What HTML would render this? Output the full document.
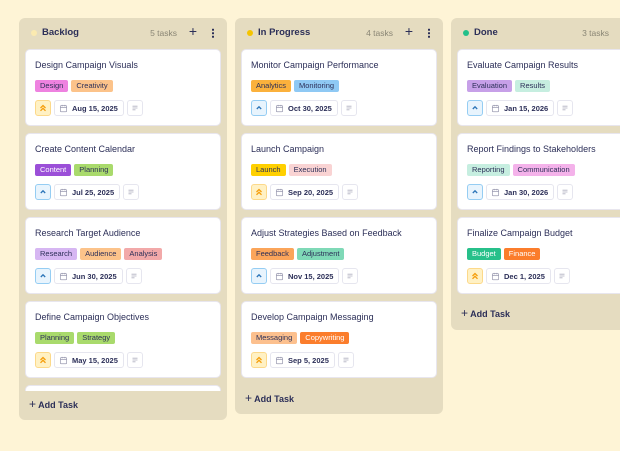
<!DOCTYPE html>
<html><head><style>
*{box-sizing:border-box;margin:0;padding:0}
body{width:620px;height:451px;background:#fef4d6;font-family:"Liberation Sans",sans-serif;color:#2c2f58;position:relative;overflow:hidden}
.col{position:absolute;top:18px;width:208px;background:#e5dcc0;border-radius:6px}
.hd{position:absolute;top:0;left:0;right:0;height:31px}
.dot{position:absolute;left:12px;top:12px;width:6px;height:6px;border-radius:50%}
.name{position:absolute;left:23px;top:9px;font-size:9.5px;font-weight:bold}
.cnt{position:absolute;right:50px;top:10px;font-size:8.5px;color:#8a8675}
.plus{position:absolute;right:30px;top:5px;font-size:14px;color:#2c2f58}
.more{position:absolute;right:13px;top:10px;width:2px;height:10px;background:radial-gradient(circle,#2c2f58 1px,transparent 1.2px) 0 0/2px 3.5px}
.card{position:absolute;left:6px;width:196px;height:77px;background:#fff;border:1px solid #e8e6ee;border-radius:5px}
.t{position:absolute;left:9px;top:10px;font-size:9px;white-space:nowrap}
.tags{position:absolute;left:9px;top:30px;display:flex;gap:3px}
.tag{height:12px;line-height:12px;font-size:7.5px;padding:0 5px;border-radius:2px;color:#2c2f58}
.ft{position:absolute;left:9px;top:50px;display:flex;gap:3px}
.pr{width:16px;height:16px;border-radius:3px;border:1px solid;display:flex;align-items:center;justify-content:center}
.hi{background:#fff1c4;border-color:#fcd98a}
.lo{background:#e8f4fd;border-color:#95cdf3}
.dt{height:16px;border:1px solid #e6e6ef;border-radius:3px;font-size:7.5px;display:flex;align-items:center;padding:0 5px 0 4px;gap:4px;font-weight:bold}
.cm{width:16px;height:16px;border:1px solid #e6e6ef;border-radius:3px;display:flex;align-items:center;justify-content:center}
.add{position:absolute;left:10px;font-size:9px;font-weight:bold}
</style></head><body>
<svg width="0" height="0" style="position:absolute">
<defs>
<symbol id="hi" viewBox="0 0 10 10"><path d="M2.5 5 L5 2.5 L7.5 5 M2.5 7.8 L5 5.3 L7.5 7.8" fill="none" stroke="#f59e0b" stroke-width="1.3"/></symbol>
<symbol id="lo" viewBox="0 0 10 10"><path d="M2.8 6 L5 3.8 L7.2 6" fill="none" stroke="#2b74b8" stroke-width="1.3"/></symbol>
<symbol id="cal" viewBox="0 0 10 10"><rect x="1.5" y="1.8" width="7" height="6.8" rx="1" fill="none" stroke="#9a9ab0" stroke-width=".8"/><path d="M1.5 4h7M3.5 1v1.6M6.5 1v1.6" stroke="#9a9ab0" stroke-width=".8"/></symbol>
<symbol id="cm" viewBox="0 0 10 10"><path d="M2.5 3.2h5M2.5 5h5M2.5 6.8h3" stroke="#b0b0c0" stroke-width=".8"/></symbol>
</defs></svg>

<!-- Backlog -->
<div class="col" style="left:19px;height:402px">
<div class="hd"><div class="dot" style="background:#fbeab0"></div><div class="name">Backlog</div><div class="cnt">5 tasks</div><div class="plus">+</div><div class="more"></div></div>
<div class="card" style="top:31px"><div class="t">Design Campaign Visuals</div><div class="tags"><span class="tag" style="background:#ee82e0">Design</span><span class="tag" style="background:#fcc38a">Creativity</span></div><div class="ft"><div class="pr hi"><svg width="10" height="10"><use href="#hi"/></svg></div><div class="dt"><svg width="9" height="9"><use href="#cal"/></svg>Aug 15, 2025</div><div class="cm"><svg width="10" height="10"><use href="#cm"/></svg></div></div></div>
<div class="card" style="top:115px"><div class="t">Create Content Calendar</div><div class="tags"><span class="tag" style="background:#9b4fd8;color:#fff">Content</span><span class="tag" style="background:#a9da6c">Planning</span></div><div class="ft"><div class="pr lo"><svg width="10" height="10"><use href="#lo"/></svg></div><div class="dt"><svg width="9" height="9"><use href="#cal"/></svg>Jul 25, 2025</div><div class="cm"><svg width="10" height="10"><use href="#cm"/></svg></div></div></div>
<div class="card" style="top:199px"><div class="t">Research Target Audience</div><div class="tags"><span class="tag" style="background:#d6b6f2">Research</span><span class="tag" style="background:#fcc38a">Audience</span><span class="tag" style="background:#f2a9a9">Analysis</span></div><div class="ft"><div class="pr lo"><svg width="10" height="10"><use href="#lo"/></svg></div><div class="dt"><svg width="9" height="9"><use href="#cal"/></svg>Jun 30, 2025</div><div class="cm"><svg width="10" height="10"><use href="#cm"/></svg></div></div></div>
<div class="card" style="top:283px"><div class="t">Define Campaign Objectives</div><div class="tags"><span class="tag" style="background:#a9da6c">Planning</span><span class="tag" style="background:#a9da6c">Strategy</span></div><div class="ft"><div class="pr hi"><svg width="10" height="10"><use href="#hi"/></svg></div><div class="dt"><svg width="9" height="9"><use href="#cal"/></svg>May 15, 2025</div><div class="cm"><svg width="10" height="10"><use href="#cm"/></svg></div></div></div>
<div class="card" style="top:367px;height:6px;border-bottom:none;border-radius:5px 5px 0 0"></div>
<div class="add" style="top:379px"><span style="font-size:12px;font-weight:normal">+</span> Add Task</div>
</div>

<!-- In Progress -->
<div class="col" style="left:235px;height:396px">
<div class="hd"><div class="dot" style="background:#f5c400"></div><div class="name">In Progress</div><div class="cnt">4 tasks</div><div class="plus">+</div><div class="more"></div></div>
<div class="card" style="top:31px"><div class="t">Monitor Campaign Performance</div><div class="tags"><span class="tag" style="background:#fbb13c">Analytics</span><span class="tag" style="background:#8fc9f4">Monitoring</span></div><div class="ft"><div class="pr lo"><svg width="10" height="10"><use href="#lo"/></svg></div><div class="dt"><svg width="9" height="9"><use href="#cal"/></svg>Oct 30, 2025</div><div class="cm"><svg width="10" height="10"><use href="#cm"/></svg></div></div></div>
<div class="card" style="top:115px"><div class="t">Launch Campaign</div><div class="tags"><span class="tag" style="background:#ffd000">Launch</span><span class="tag" style="background:#f9d3d3">Execution</span></div><div class="ft"><div class="pr hi"><svg width="10" height="10"><use href="#hi"/></svg></div><div class="dt"><svg width="9" height="9"><use href="#cal"/></svg>Sep 20, 2025</div><div class="cm"><svg width="10" height="10"><use href="#cm"/></svg></div></div></div>
<div class="card" style="top:199px"><div class="t">Adjust Strategies Based on Feedback</div><div class="tags"><span class="tag" style="background:#fba55a">Feedback</span><span class="tag" style="background:#7fd9b7">Adjustment</span></div><div class="ft"><div class="pr lo"><svg width="10" height="10"><use href="#lo"/></svg></div><div class="dt"><svg width="9" height="9"><use href="#cal"/></svg>Nov 15, 2025</div><div class="cm"><svg width="10" height="10"><use href="#cm"/></svg></div></div></div>
<div class="card" style="top:283px"><div class="t">Develop Campaign Messaging</div><div class="tags"><span class="tag" style="background:#fcc08e">Messaging</span><span class="tag" style="background:#fb7d2c;color:#fff">Copywriting</span></div><div class="ft"><div class="pr hi"><svg width="10" height="10"><use href="#hi"/></svg></div><div class="dt"><svg width="9" height="9"><use href="#cal"/></svg>Sep 5, 2025</div><div class="cm"><svg width="10" height="10"><use href="#cm"/></svg></div></div></div>
<div class="add" style="top:373px"><span style="font-size:12px;font-weight:normal">+</span> Add Task</div>
</div>

<!-- Done -->
<div class="col" style="left:451px;height:312px">
<div class="hd"><div class="dot" style="background:#22c08a"></div><div class="name">Done</div><div class="cnt">3 tasks</div><div class="plus">+</div><div class="more"></div></div>
<div class="card" style="top:31px"><div class="t">Evaluate Campaign Results</div><div class="tags"><span class="tag" style="background:#c7a0e8">Evaluation</span><span class="tag" style="background:#c6eee0">Results</span></div><div class="ft"><div class="pr lo"><svg width="10" height="10"><use href="#lo"/></svg></div><div class="dt"><svg width="9" height="9"><use href="#cal"/></svg>Jan 15, 2026</div><div class="cm"><svg width="10" height="10"><use href="#cm"/></svg></div></div></div>
<div class="card" style="top:115px"><div class="t">Report Findings to Stakeholders</div><div class="tags"><span class="tag" style="background:#c6eee0">Reporting</span><span class="tag" style="background:#f4b2ea">Communication</span></div><div class="ft"><div class="pr lo"><svg width="10" height="10"><use href="#lo"/></svg></div><div class="dt"><svg width="9" height="9"><use href="#cal"/></svg>Jan 30, 2026</div><div class="cm"><svg width="10" height="10"><use href="#cm"/></svg></div></div></div>
<div class="card" style="top:199px"><div class="t">Finalize Campaign Budget</div><div class="tags"><span class="tag" style="background:#27c08a;color:#fff">Budget</span><span class="tag" style="background:#fb7d2c;color:#fff">Finance</span></div><div class="ft"><div class="pr hi"><svg width="10" height="10"><use href="#hi"/></svg></div><div class="dt"><svg width="9" height="9"><use href="#cal"/></svg>Dec 1, 2025</div><div class="cm"><svg width="10" height="10"><use href="#cm"/></svg></div></div></div>
<div class="add" style="top:288px"><span style="font-size:12px;font-weight:normal">+</span> Add Task</div>
</div>
</body></html>
